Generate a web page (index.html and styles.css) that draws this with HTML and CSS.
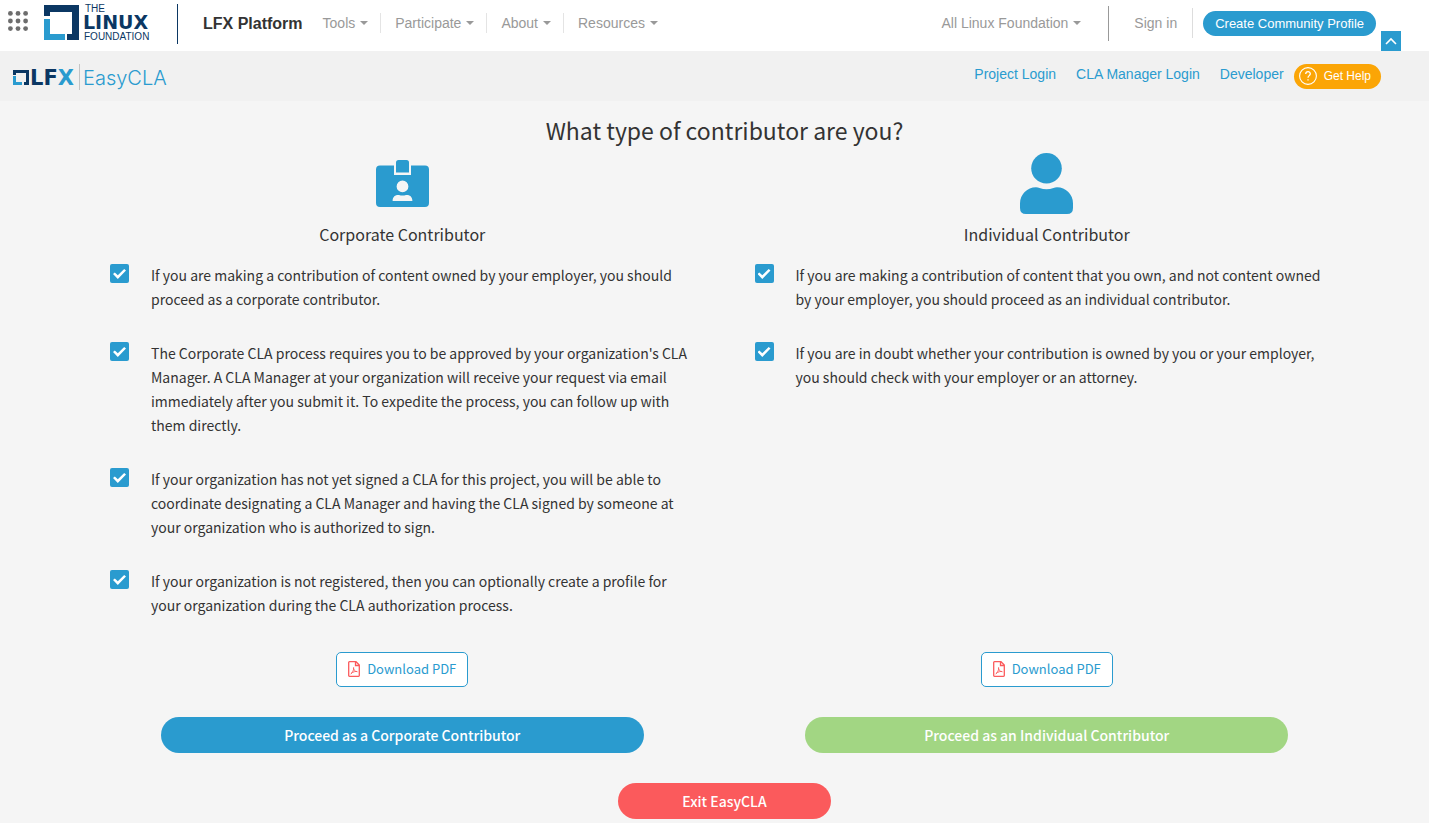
FILE: index.html
```html
<!DOCTYPE html>
<html lang="en">
<head>
<meta charset="utf-8">
<meta name="viewport" content="width=device-width, initial-scale=1">
<title>LFX EasyCLA</title>
<link rel="stylesheet" href="styles.css">
</head>
<body>
<header class="topbar">
  <button class="apps" type="button" aria-label="All apps">
    <svg width="20" height="20" viewBox="0 0 20 20" fill="#6d6d6d"><circle cx="2.4" cy="2.4" r="2.4"/><circle cx="10" cy="2.4" r="2.4"/><circle cx="17.6" cy="2.4" r="2.4"/><circle cx="2.4" cy="10" r="2.4"/><circle cx="10" cy="10" r="2.4"/><circle cx="17.6" cy="10" r="2.4"/><circle cx="2.4" cy="17.6" r="2.4"/><circle cx="10" cy="17.6" r="2.4"/><circle cx="17.6" cy="17.6" r="2.4"/></svg>
  </button>
  <a class="lf-logo" href="#" aria-label="The Linux Foundation">
    <svg width="112" height="40" viewBox="0 0 112 40">
      <path d="M1 0H36V35H24V29H29V7H7V11H1Z" fill="#0b3763"/>
      <path d="M1 14H7V29H22V35H1Z" fill="#2a9bcf"/>
      <g fill="#0b3763">
        <text class="logo-light" x="42" y="7">THE</text>
        <text class="logo-heavy" x="40" y="24">LINUX</text>
        <text class="logo-light" x="41" y="35">FOUNDATION</text>
      </g>
    </svg>
  </a>
  <a class="brand" href="#">LFX Platform</a>
  <nav class="menu" aria-label="Main">
    <button class="menu-item" type="button">Tools</button>
    <button class="menu-item" type="button">Participate</button>
    <button class="menu-item" type="button">About</button>
    <button class="menu-item" type="button">Resources</button>
  </nav>
  <div class="account">
    <button class="menu-item scope" type="button">All Linux Foundation</button>
    <a class="signin" href="#">Sign in</a>
    <a class="profile" href="#">Create Community Profile</a>
  </div>
  <button class="collapse" type="button" aria-label="Collapse header">
    <svg width="12" height="8" viewBox="0 0 12 8" fill="none" stroke="#fff" stroke-width="1.6"><path d="M1 7L6 2L11 7"/></svg>
  </button>
</header>

<div class="subbar">
  <a class="easycla" href="#" aria-label="LFX EasyCLA">
    <svg width="156" height="28" viewBox="0 0 156 28">
      <path d="M0 8H16V23H11V20H13V11H3V13H0Z" fill="#0b3763"/>
      <path d="M0 14H3V20H9V23H0Z" fill="#2a9bcf"/>
      <text class="logo-lfx" x="17" y="23" fill="#0b3763">LF<tspan fill="#2a9bcf">X</tspan></text>
      <path d="M66.500 2V28" stroke="#c4c4c4"/>
      <text class="logo-easy" x="70" y="23" fill="#2a9bcf">EasyCLA</text>
    </svg>
  </a>
  <nav class="links" aria-label="EasyCLA">
    <a href="#">Project Login</a>
    <a href="#">CLA Manager Login</a>
    <a href="#">Developer</a>
  </nav>
  <button class="help" type="button">
    <svg width="18" height="18" viewBox="0 0 18 18" fill="none" stroke="#fff"><circle cx="9" cy="9" r="8.4" stroke-width="1.1"/><path d="M6.7 7C6.8 3.8 11.3 3.9 11.3 6.8C11.3 8.6 9 8.7 9 10.8M9 12.2V13.6" stroke-width="1.3"/></svg>
    Get Help
  </button>
</div>

<main class="page">
  <h1>What type of contributor are you?</h1>
  <div class="columns">
    <section class="column">
      <div class="figure">
        <svg width="53" height="47" viewBox="0 0 53 47">
          <path d="M4 5.5H18V15H35V5.5H49Q53 5.5 53 9.500V43Q53 47 49 47H4Q0 47 0 43V9.500Q0 5.500 4 5.500ZM26.500 20.500A5.900 5.900 0 1 0 26.500 32.300A5.900 5.900 0 1 0 26.500 20.500ZM16.600 41H36.400C36.400 36 33 34.700 30 35Q26.500 36.200 23 35C20 34.700 16.600 36 16.600 41Z" fill="#2a9bcf" fill-rule="evenodd"/>
          <path d="M20 12.500V2.500Q20 0 22.500 0H30.500Q33 0 33 2.500V12.500Z" fill="#2a9bcf"/>
        </svg>
      </div>
      <h2>Corporate Contributor</h2>
      <ul class="checks">
        <li><input type="checkbox" id="c1" checked><label for="c1">If you are making a contribution of content owned by your employer, you should proceed as a corporate contributor.</label></li>
        <li><input type="checkbox" id="c2" checked><label for="c2">The Corporate CLA process requires you to be approved by your organization's CLA Manager. A CLA Manager at your organization will receive your request via email immediately after you submit it. To expedite the process, you can follow up with them directly.</label></li>
        <li><input type="checkbox" id="c3" checked><label for="c3">If your organization has not yet signed a CLA for this project, you will be able to coordinate designating a CLA Manager and having the CLA signed by someone at your organization who is authorized to sign.</label></li>
        <li><input type="checkbox" id="c4" checked><label for="c4">If your organization is not registered, then you can optionally create a profile for your organization during the CLA authorization process.</label></li>
      </ul>
      <button class="download" type="button">
        <svg width="12" height="16" viewBox="0 0 12 16" fill="none" stroke="#fb5a5c" stroke-width="1.3"><path d="M1.500 .7H8L11.300 4V14.500Q11.300 15.300 10.500 15.300H1.500Q.7 15.300 .7 14.500V1.500Q.7 .7 1.500 .7ZM7.500 .7V4.500H11.300"/><path d="M2.800 12.800C4.300 12 6.200 8.500 5.600 6.500C5 7.800 6.500 10.600 9.300 10.700C8 9.900 4.600 10.900 2.800 12.800Z" stroke-width=".9"/></svg>
        Download PDF
      </button>
      <button class="pill corporate" type="button">Proceed as a Corporate Contributor</button>
    </section>
    <section class="column">
      <div class="figure">
        <svg width="53" height="61" viewBox="0 0 53 61" fill="#2a9bcf">
          <circle cx="26.500" cy="15.300" r="15.300"/>
          <path d="M16 34.300Q18 34.300 19.500 35Q26.500 37.600 33.500 35Q35 34.300 37 34.300A16 16 0 0 1 53 50.300V55Q53 61 47 61H6Q0 61 0 55V50.300A16 16 0 0 1 16 34.300Z"/>
        </svg>
      </div>
      <h2>Individual Contributor</h2>
      <ul class="checks">
        <li><input type="checkbox" id="i1" checked><label for="i1">If you are making a contribution of content that you own, and not content owned by your employer, you should proceed as an individual contributor.</label></li>
        <li><input type="checkbox" id="i2" checked><label for="i2">If you are in doubt whether your contribution is owned by you or your employer, you should check with your employer or an attorney.</label></li>
      </ul>
      <button class="download" type="button">
        <svg width="12" height="16" viewBox="0 0 12 16" fill="none" stroke="#fb5a5c" stroke-width="1.3"><path d="M1.500 .7H8L11.300 4V14.500Q11.300 15.300 10.500 15.300H1.500Q.7 15.300 .7 14.500V1.500Q.7 .7 1.500 .7ZM7.500 .7V4.500H11.300"/><path d="M2.800 12.800C4.300 12 6.200 8.500 5.600 6.500C5 7.800 6.500 10.600 9.300 10.700C8 9.900 4.600 10.900 2.800 12.800Z" stroke-width=".9"/></svg>
        Download PDF
      </button>
      <button class="pill individual" type="button">Proceed as an Individual Contributor</button>
    </section>
  </div>
  <button class="pill exit" type="button">Exit EasyCLA</button>
</main>
</body>
</html>
```
FILE: styles.css
```css
* {
  box-sizing: border-box;
}

body {
  margin: 0;
  background: #f5f5f5;
  color: #333;
  font-family: "Noto Sans CJK SC", "Noto Sans", sans-serif;
  font-size: 14px;
}

button {
  margin: 0;
  padding: 0;
  border: 0;
  background: none;
  font: inherit;
  color: inherit;
  cursor: pointer;
}

a {
  text-decoration: none;
}

svg {
  display: block;
  flex: none;
  overflow: visible;
}

.topbar,
.subbar {
  display: flex;
  font-family: "Liberation Sans", Arial, sans-serif;
  font-size: 14px;
}

.topbar {
  height: 51px;
  padding: 0 28px 0 8px;
  background: #fff;
  color: #999;
}

.apps {
  align-self: flex-start;
  margin-top: 11px;
}

.lf-logo {
  align-self: flex-start;
  height: 40px;
  margin: 4px 0 0 15px;
  padding-right: 22px;
  border-right: 1px solid #0b3763;
}

.lf-logo svg {
  margin-top: 1px;
}

.logo-light {
  font-size: 10px;
}

.logo-heavy {
  font-family: "DejaVu Sans", sans-serif;
  font-size: 19px;
  font-weight: bold;
}

.logo-lfx {
  font-family: "DejaVu Sans", sans-serif;
  font-size: 21px;
  font-weight: bold;
}

.logo-easy {
  font-family: Inter, sans-serif;
  font-size: 20px;
  font-weight: 300;
}

.brand {
  margin-left: 25px;
  color: #333;
  font-size: 16px;
  font-weight: bold;
  line-height: 47px;
}

.menu,
.account {
  display: flex;
  align-items: center;
  height: 46px;
}

.menu {
  margin-left: 6px;
}

.menu-item {
  display: flex;
  align-items: center;
  gap: 5px;
  height: 20px;
  padding: 0 12px 0 14px;
}

.menu-item::after {
  content: "";
  border: 4px solid transparent;
  border-top-color: #999;
  border-bottom: 0;
}

.menu-item + .menu-item {
  border-left: 1px solid #e4e4e4;
}

.account {
  margin-left: auto;
}

.scope {
  height: 35px;
  padding: 0 27px 0 0;
  border-right: 1px solid #999;
}

.signin {
  padding: 7px 15px 7px 25px;
  border-right: 1px solid #ddd;
  color: #999;
}

.profile {
  margin-left: 10px;
  padding: 0 12px;
  border-radius: 13px;
  background: #2a9bcf;
  color: #fff;
  font-size: 13px;
  line-height: 25px;
}

.collapse {
  display: flex;
  align-items: center;
  justify-content: center;
  align-self: flex-end;
  width: 20px;
  height: 20px;
  margin-left: 5px;
  background: #2a9bcf;
}

.subbar {
  align-items: center;
  height: 50px;
  padding: 0 48px 0 13px;
  background: #f1f1f1;
}

.links {
  display: flex;
  gap: 20px;
  margin: 0 10px 4px auto;
}

.links a {
  color: #2a9bcf;
}

.help {
  display: flex;
  align-items: center;
  gap: 7px;
  height: 25px;
  padding: 0 10px 0 5px;
  border-radius: 13px;
  background: #fba506;
  color: #fff;
  font-size: 12px;
}

.page {
  display: flex;
  flex-direction: column;
  align-items: center;
  padding: 11px 60px 4px 80px;
}

h1,
h2 {
  margin: 0;
  font-weight: 400;
}

h1 {
  font-size: 23px;
  line-height: 36px;
}

.columns {
  display: grid;
  grid-template-columns: 1fr 1fr;
  width: 100%;
}

.column {
  display: flex;
  flex-direction: column;
  align-items: center;
}

.figure {
  display: flex;
  align-items: center;
  height: 70px;
}

h2 {
  font-size: 16px;
  line-height: 32px;
}

.checks {
  display: flex;
  flex-direction: column;
  gap: 30px;
  width: 100%;
  margin: 0 0 35px;
  padding: 13px 34px 0 30px;
  list-style: none;
  line-height: 24px;
}

.checks li {
  display: flex;
  align-items: flex-start;
  gap: 22px;
}

.checks input {
  appearance: none;
  flex: none;
  width: 19px;
  height: 19px;
  margin: 1px 0 0;
  border-radius: 2px;
  background: #2a9bcf;
}

.checks input:checked::before {
  content: "";
  display: block;
  width: 13px;
  height: 10px;
  margin: 5px 3px;
  background: #fff;
  clip-path: polygon(0 50%, 14% 34%, 37% 62%, 86% 0, 100% 16%, 37% 100%);
}

.download {
  display: flex;
  align-items: center;
  justify-content: center;
  gap: 7px;
  height: 35px;
  margin: auto 0 30px;
  padding: 0 11px 2px;
  border: 1px solid #2a9bcf;
  border-radius: 5px;
  background: #fff;
  color: #2a9bcf;
  font-size: 13px;
}

.pill {
  height: 36px;
  border-radius: 18px;
  color: #fff;
  font-weight: 500;
}

.corporate,
.individual {
  width: 75%;
}

.corporate {
  background: #2a9bcf;
}

.individual {
  background: #a2d683;
}

.exit {
  width: 213px;
  margin-top: 30px;
  background: #fb5a5c;
}
```
